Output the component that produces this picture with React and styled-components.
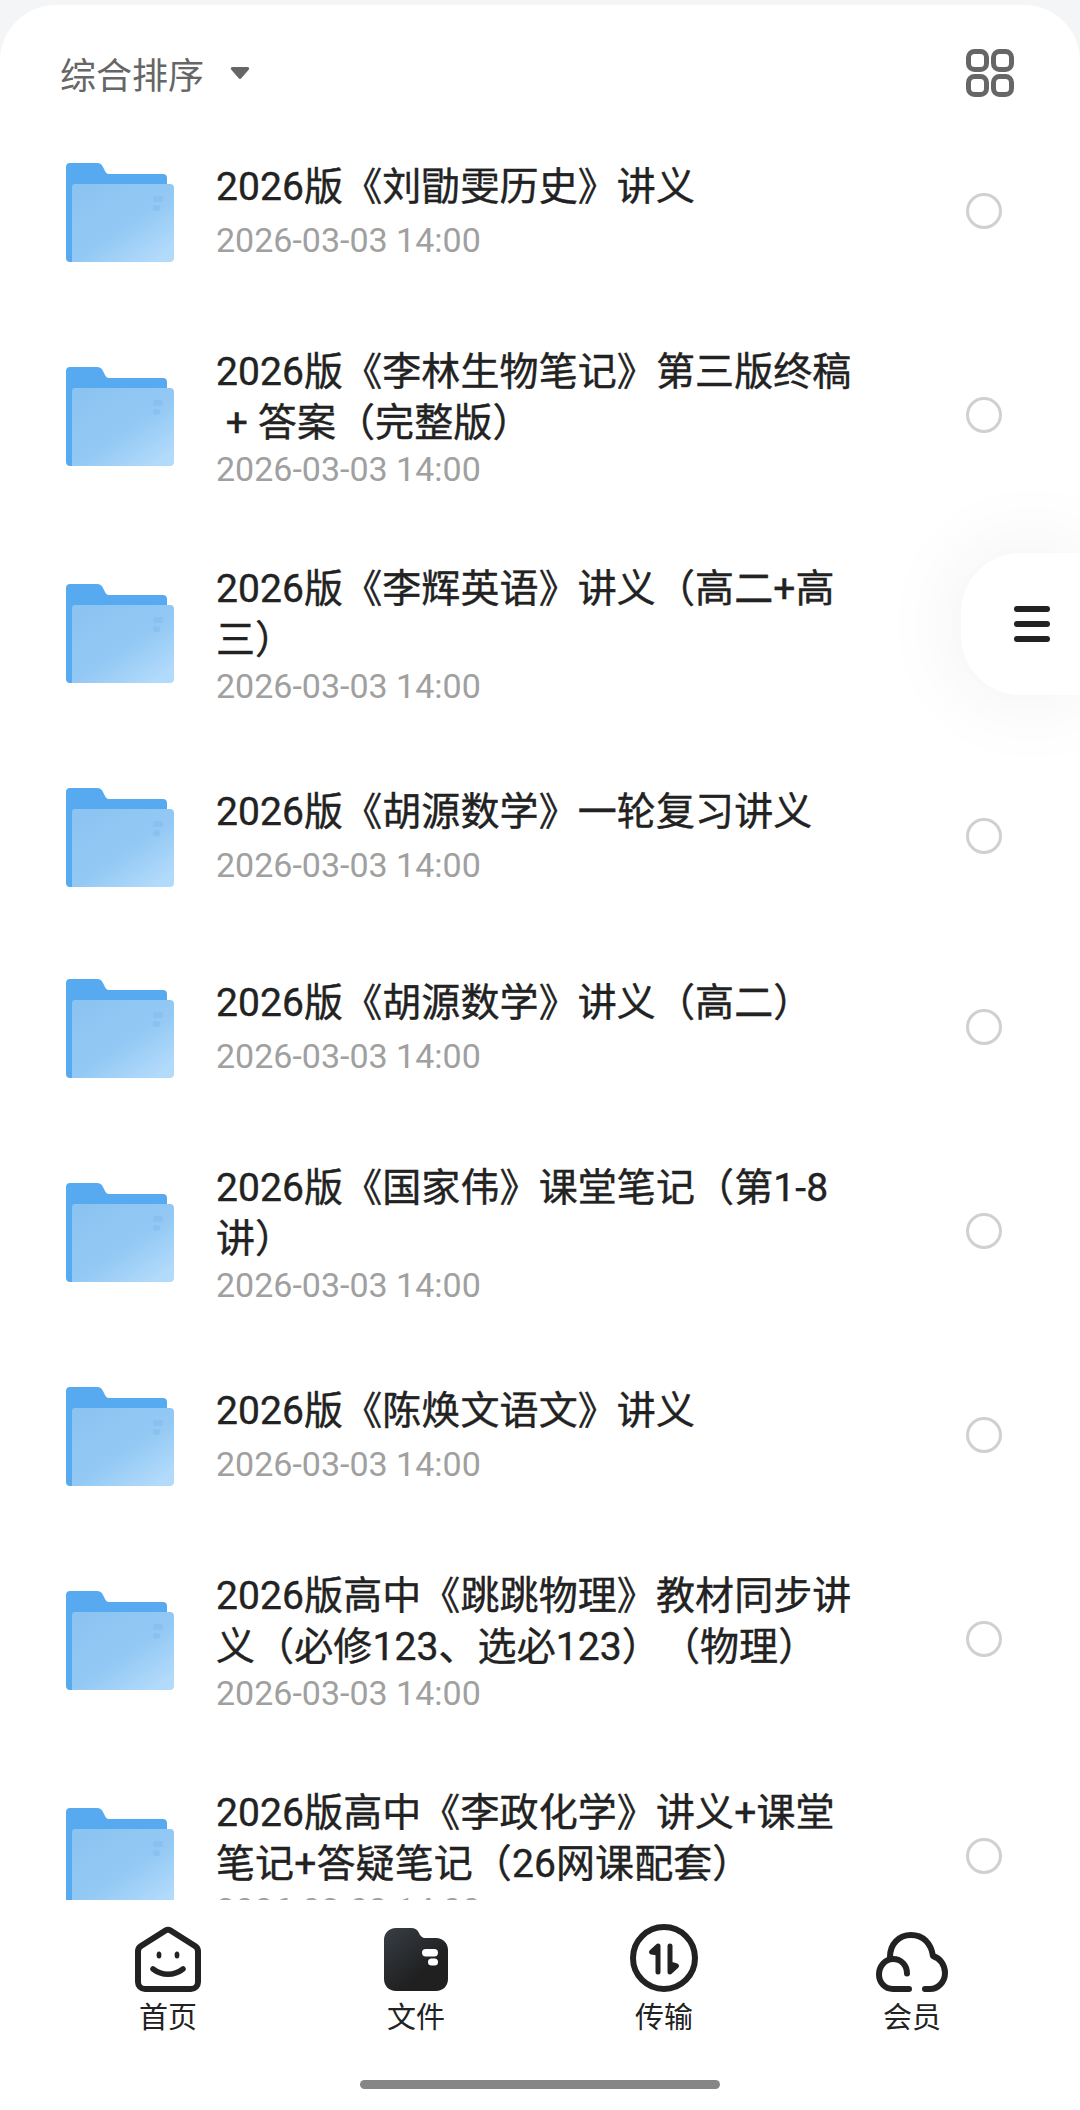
import React from 'react';
import styled, { createGlobalStyle } from 'styled-components';

const GlobalStyle = createGlobalStyle`
  html, body {
    margin: 0;
    padding: 0;
    background: #f4f5f6;
  }
  * {
    box-sizing: border-box;
  }
`;

const FONT = `Roboto, "Noto Sans CJK SC", sans-serif`;

const Page = styled.div`
  position: relative;
  width: 1080px;
  height: 2110px;
  padding-top: 5px;
  overflow: hidden;
  font-family: ${FONT};
`;

const Sheet = styled.div`
  display: flex;
  flex-direction: column;
  height: 100%;
  background: #fff;
  border-radius: 56px 56px 0 0;
`;

const Toolbar = styled.div`
  flex: none;
  display: flex;
  align-items: center;
  justify-content: space-between;
  height: 110px;
  padding: 26px 66px 0 60px;
`;

const Sort = styled.div`
  display: flex;
  align-items: center;
  gap: 26px;
  font-size: 36px;
  color: #666;
`;

const List = styled.div`
  flex: 1;
  min-height: 0;
  overflow: hidden;
`;

const Row = styled.div`
  display: flex;
  align-items: center;
  min-height: 191px;
  padding: 34.5px 78px 34.5px 66px;
`;

const FolderSvg = styled.svg`
  flex: none;
  margin-top: 3px;
`;

const Body = styled.div`
  flex: 1;
  min-width: 0;
  min-height: 110px;
  margin-left: 42px;
  padding-top: 6px;
`;

const Title = styled.div`
  max-width: 648px;
  min-height: 58px;
  font-size: 39px;
  line-height: 51px;
  font-weight: 400;
  letter-spacing: 0.1px;
  color: #222;
  -webkit-text-stroke: 0.4px #222;
  text-spacing-trim: space-all;
`;

const Stamp = styled.div`
  font-size: 34px;
  line-height: 40px;
  color: #a0a0a0;
`;

const Radio = styled.div`
  flex: none;
  width: 36px;
  height: 36px;
  border: 3px solid #d0d0d0;
  border-radius: 50%;
`;

const FloatTab = styled.div`
  position: absolute;
  top: 553px;
  right: 0;
  display: flex;
  flex-direction: column;
  justify-content: center;
  gap: 9px;
  width: 119px;
  height: 142px;
  padding-left: 53px;
  background: #fff;
  border-radius: 60px 0 0 60px;
  box-shadow: 0 0 90px rgba(0, 0, 0, 0.07);
`;

const FloatLine = styled.span`
  display: block;
  width: 36px;
  height: 6px;
  border-radius: 3px;
  background: #222;
`;

const TabBar = styled.div`
  flex: none;
  position: relative;
  display: grid;
  grid-template-columns: repeat(4, 248px);
  justify-content: center;
  height: 210px;
  padding-top: 24px;
  background: #fff;
`;

const Tab = styled.div`
  display: flex;
  flex-direction: column;
  align-items: center;
  font-size: 29px;
  color: #222;
`;

const TabIcon = styled.div`
  display: flex;
  align-items: flex-end;
  justify-content: center;
  height: 68px;
`;

const TabLabel = styled.span`
  margin-top: 5px;
  line-height: 42px;
`;

const HomeBar = styled.div`
  position: absolute;
  left: 360px;
  bottom: 21px;
  width: 360px;
  height: 9px;
  border-radius: 5px;
  background: #868686;
`;

const Caret = () => (
  <svg width="20" height="14" viewBox="0 0 20 14">
    <path d="M2.5 1h15c1.6 0 2.2 1.6 1.2 2.7l-7.4 8.6c-.7.9-1.900.9-2.600 0L1.300 3.700C.3 2.600.9 1 2.500 1z" fill="#666" />
  </svg>
);

const GridIcon = () => (
  <svg width="48" height="48" viewBox="0 0 48 48" fill="none" stroke="#666" strokeWidth="5">
    <rect x="2.500" y="2.500" width="18" height="18" rx="6" />
    <rect x="27.500" y="2.500" width="18" height="18" rx="6" />
    <rect x="2.500" y="27.500" width="18" height="18" rx="6" />
    <rect x="27.500" y="27.500" width="18" height="18" rx="6" />
  </svg>
);

const FolderIcon = ({ id }) => (
  <FolderSvg width="108" height="99" viewBox="0 0 108 99">
    <defs>
      <linearGradient id={id} x1="0.1" y1="0.1" x2="0.85" y2="0.95">
        <stop offset="0" stopColor="#8cc4f1" />
        <stop offset="0.55" stopColor="#93c9f4" />
        <stop offset="1" stopColor="#b2dafb" />
      </linearGradient>
    </defs>
    <path d="M4 0h27c3 0 4.500 1 6 4l2 4c1 2 2 3 4 3h54c2.500 0 4 1.500 4 4v20H7v64H4c-2.500 0-4-1.500-4-4V4C0 1.500 1.500 0 4 0z" fill="#58aaf0" />
    <path d="M9 21h95c2.500 0 4 1.500 4 4v70c0 2.500-1.500 4-4 4H6V24c0-2 1-3 3-3z" fill={`url(#${id})`} />
    <g fill="#7fb6e6" opacity="0.4">
      <rect x="87" y="33" width="10" height="6" rx="2" />
      <rect x="87" y="42" width="7" height="6" rx="2" />
    </g>
  </FolderSvg>
);

const HomeIcon = () => (
  <svg width="66" height="66" viewBox="0 0 66 66" fill="none" stroke="#222" strokeWidth="6" strokeLinecap="round" strokeLinejoin="round">
    <path d="M30.500 4.500 6 20c-1.900 1.200-3 3-3 5.300V56c0 4 3 7 7 7h46c4 0 7-3 7-7V25.300c0-2.300-1.100-4.100-3-5.300L35.500 4.500c-1.600-1-3.400-1-5 0z" />
    <path d="M18 43c9 7 21 7 30 0" strokeWidth="5.500" />
    <ellipse cx="24" cy="29" rx="2.400" ry="3.600" fill="#222" stroke="none" />
    <ellipse cx="42" cy="29" rx="2.400" ry="3.600" fill="#222" stroke="none" />
  </svg>
);

const FilesIcon = () => (
  <svg width="66" height="66" viewBox="0 0 66 66">
    <defs>
      <linearGradient id="filesFill" x1="0.1" y1="0.1" x2="0.6" y2="0.7">
        <stop offset="0" stopColor="#343a40" />
        <stop offset="1" stopColor="#202020" />
      </linearGradient>
    </defs>
    <path d="M13 2h15c4 0 6.500 1.800 8 5 1 2.500 2.500 4 5 5h12c7 0 12 5 12 12v29c0 7-5 12-12 12H13C6 65 1 60 1 53V14C1 7 6 2 13 2z" fill="url(#filesFill)" />
    <rect x="39" y="23" width="16" height="7.500" rx="3.700" fill="#fff" />
    <rect x="45" y="32.500" width="10" height="7" rx="3.500" fill="#fff" />
  </svg>
);

const TransferIcon = () => (
  <svg width="68" height="68" viewBox="0 0 68 68" fill="none">
    <circle cx="34" cy="34" r="31" stroke="#222" strokeWidth="6" />
    <path d="M28 48V22l-6.500 6 6.500 1" stroke="#222" strokeWidth="5" strokeLinecap="round" strokeLinejoin="round" fill="#222" />
    <path d="M40 22v26l6.500-6-6.500-2" stroke="#222" strokeWidth="5" strokeLinecap="round" strokeLinejoin="round" fill="#222" />
  </svg>
);

const CloudIcon = () => (
  <svg width="72" height="60" viewBox="0 0 72 60" fill="none" stroke="#222" strokeWidth="6" strokeLinecap="round" strokeLinejoin="round">
    <path d="M33 57H17C9 57 3 50.500 3 42.500S9 27 17 27c8.500 0 14 6.500 14 14.500" />
    <path d="M14 25C14 12 23 3 35 3c12 0 20 8 22 21 7 2 12 9 12 17 0 9-7 16-15 16h-5" />
  </svg>
);

const files = [
  '2026版《刘勖雯历史》讲义',
  '2026版《李林生物笔记》第三版终稿\u200b\u00a0+ 答案（完整版）',
  '2026版《李辉英语》讲义（高二+高三）',
  '2026版《胡源数学》一轮复习讲义',
  '2026版《胡源数学》讲义（高二）',
  '2026版《国家伟》课堂笔记（第1-8讲）',
  '2026版《陈焕文语文》讲义',
  '2026版高中《跳跳物理》教材同步讲义（必修123、选必123）（物理）',
  '2026版高中《李政化学》讲义+课堂笔记+答疑笔记（26网课配套）',
];

const tabs = [
  { label: '首页', icon: <HomeIcon /> },
  { label: '文件', icon: <FilesIcon /> },
  { label: '传输', icon: <TransferIcon /> },
  { label: '会员', icon: <CloudIcon /> },
];

export default function App() {
  return (
    <Page>
      <GlobalStyle />
      <Sheet>
        <Toolbar>
          <Sort>
            综合排序
            <Caret />
          </Sort>
          <GridIcon />
        </Toolbar>
        <List>
          {files.map((name, i) => (
            <Row key={name}>
              <FolderIcon id={`folder${i}`} />
              <Body>
                <Title>{name}</Title>
                <Stamp>2026-03-03 14:00</Stamp>
              </Body>
              <Radio />
            </Row>
          ))}
        </List>
        <TabBar>
          {tabs.map(tab => (
            <Tab key={tab.label}>
              <TabIcon>{tab.icon}</TabIcon>
              <TabLabel>{tab.label}</TabLabel>
            </Tab>
          ))}
          <HomeBar />
        </TabBar>
      </Sheet>
      <FloatTab>
        <FloatLine />
        <FloatLine />
        <FloatLine />
      </FloatTab>
    </Page>
  );
}
